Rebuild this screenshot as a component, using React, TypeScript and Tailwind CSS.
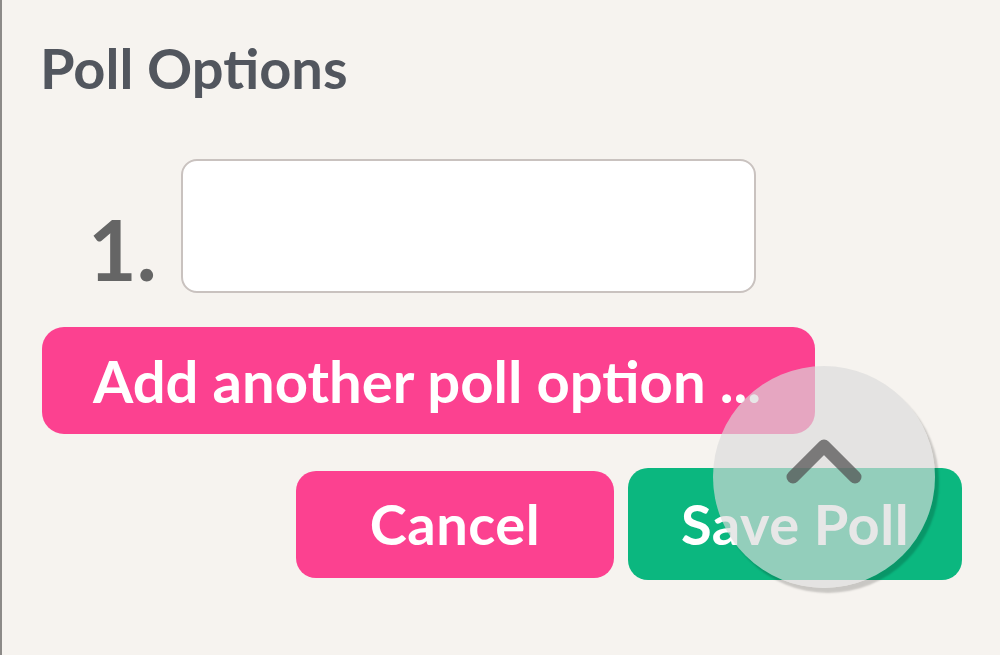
import React from "react";

export default function App() {
  return (
    <div
      className="relative w-[1000px] h-[655px] overflow-hidden bg-[#f6f3ef] border-l-2 border-[#8c8a88]"
      style={{ fontFamily: "Lato, 'Noto Sans', sans-serif" }}
    >
      <div className="pl-[40px] pt-[28px]">
        <h1 className="text-[56px] leading-[80px] font-bold text-[#52565e] -ml-[2px]">
          Poll Options
        </h1>
        <div className="mt-[51px] flex items-end">
          <span className="w-[139px] pl-[46px] text-[84px] leading-[84px] font-bold text-[#656565] mb-[2px]">
            1.
          </span>
          <div className="w-[575px] h-[134px] rounded-[16px] border-2 border-[#c9c2bf] bg-white" />
        </div>
        <button className="mt-[34px] w-[773px] h-[107px] rounded-[22px] bg-[#fc4190] text-left pl-[51px] text-white text-[58px] leading-[60px] font-bold">
          Add another poll option ...
        </button>
        <div className="mt-[34px] flex items-center justify-end pr-[38px] gap-[14px]">
          <button className="w-[318px] h-[107px] rounded-[20px] bg-[#fc4190] text-white text-[56px] leading-[60px] font-bold tracking-[0.5px]">
            Cancel
          </button>
          <button className="w-[334px] h-[112px] rounded-[20px] bg-[#0bb77f] text-white text-[56px] leading-[60px] font-bold tracking-[0.5px]">
            Save Poll
          </button>
        </div>
      </div>
      <div className="absolute left-[711px] top-[366px] w-[222px] h-[222px] rounded-full bg-[rgba(218,218,218,0.66)] shadow-[4px_5px_2px_rgba(0,0,0,0.18)] flex items-center justify-center">
        <svg width="90" height="60" viewBox="0 0 90 60" className="-mt-[40px]">
          <polyline
            points="14,50 45,19 76,50"
            fill="none"
            stroke="rgba(80,80,80,0.72)"
            strokeWidth="13"
            strokeLinecap="round"
            strokeLinejoin="round"
          />
        </svg>
      </div>
    </div>
  );
}
